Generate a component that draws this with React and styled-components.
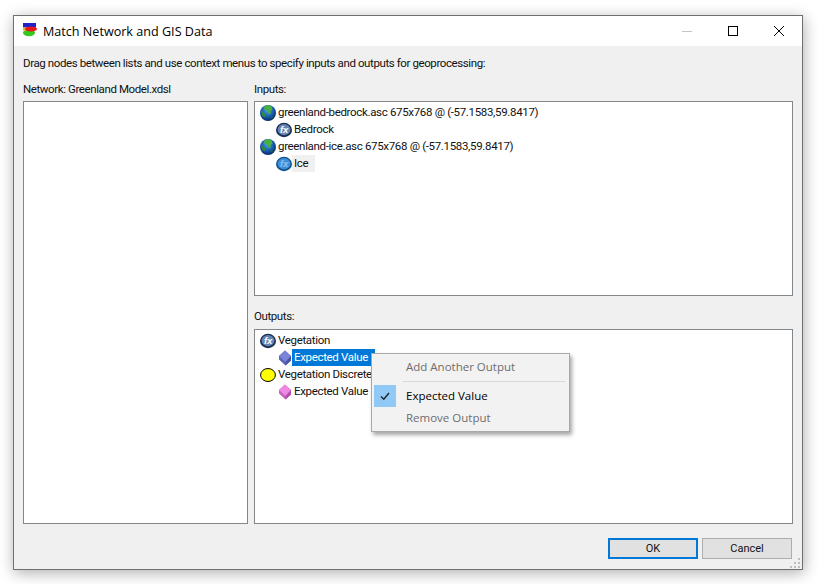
import React from 'react'
import styled, {createGlobalStyle} from 'styled-components'

const GlobalStyle = createGlobalStyle`
    html, body {
        margin: 0;
        background: #fff;
        overflow: hidden;
    }
    body {
        font-family: Roboto, "Noto Sans", sans-serif;
        font-size: 11.5px;
        letter-spacing: -0.4px;
        color: #111;
    }
`

const Page = styled.div`
    width: 819px;
    height: 584px;
    padding: 15px 0 0 13px;
    box-sizing: border-box;
`

const Dialog = styled.div`
    position: relative;
    width: 790px;
    height: 555px;
    box-sizing: border-box;
    display: flex;
    flex-direction: column;
    background: #f0f0f0;
    border: 1px solid #6f6f6f;
    box-shadow: 1px 3px 14px rgba(0, 0, 0, 0.32);
`

const TitleBar = styled.div`
    height: 30px;
    flex: none;
    display: flex;
    align-items: center;
    background: #fff;
    padding-left: 8px;
`

const TitleText = styled.div`
    flex: 1;
    margin-left: 5px;
    font-family: "Open Sans", sans-serif;
    font-size: 12.6px;
    letter-spacing: 0;
    color: #000;
`

const WinButton = styled.div`
    width: 46px;
    height: 30px;
    display: flex;
    align-items: center;
    justify-content: center;
`

const Body = styled.div`
    flex: 1;
    display: flex;
    flex-direction: column;
    padding: 9px 9px 0;
`

const Line = styled.div`
    height: 16px;
    line-height: 16px;
    white-space: nowrap;
`

const Columns = styled.div`
    display: grid;
    grid-template-columns: 225px 539px;
    column-gap: 6px;
    margin-top: 10px;
`

const Column = styled.div`
    display: flex;
    flex-direction: column;
`

const Label = styled(Line)`
    margin-top: ${p => p.$top || 0}px;
    margin-bottom: ${p => p.$bottom || 4}px;
`

const ListBox = styled.div`
    height: ${p => p.$h}px;
    box-sizing: border-box;
    background: #fff;
    border: 1px solid #82878c;
    padding: 2px 0 0 5px;
`

const Row = styled.div`
    height: 17px;
    display: flex;
    align-items: center;
    padding-left: ${p => (p.$child ? 16 : 0)}px;
    white-space: nowrap;
    letter-spacing: -0.33px;
    svg {
        flex: none;
    }
`

const RowText = styled.span`
    height: 17px;
    line-height: 16px;
    padding: 0 ${p => p.$right || 2}px 0 2px;
    background: ${p => (p.$sel ? '#0078d7' : p.$hover ? '#f0f0f0' : 'transparent')};
    color: ${p => (p.$sel ? '#fff' : '#111')};
`

const Footer = styled.div`
    display: flex;
    justify-content: flex-end;
    gap: 4px;
    margin-top: 14px;
    padding-right: 1px;
`

const Button = styled.div`
    width: 90px;
    height: 21px;
    box-sizing: border-box;
    display: flex;
    align-items: center;
    justify-content: center;
    font-size: 11px;
    letter-spacing: 0;
    background: #e1e1e1;
    border: ${p => (p.$primary ? '2px solid #0078d7' : '1px solid #adadad')};
`

const Grip = styled.svg`
    position: absolute;
    right: 1px;
    bottom: 0;
`

const Menu = styled.div`
    position: absolute;
    left: 357px;
    top: 337px;
    width: 199px;
    height: 79px;
    box-sizing: border-box;
    padding: 2px;
    font-family: "Open Sans", sans-serif;
    font-size: 11.5px;
    letter-spacing: 0;
    background: #f2f2f2;
    border: 1px solid #a8a8a8;
    box-shadow: 2px 3px 4px rgba(0, 0, 0, 0.35);
`

const MenuItem = styled.div`
    height: 22px;
    line-height: 20px;
    display: flex;
    align-items: center;
    color: ${p => (p.$off ? '#6d6d6d' : '#000')};
    white-space: nowrap;
`

const CheckCell = styled.div`
    width: 22px;
    height: 22px;
    margin-right: 10px;
    display: flex;
    align-items: center;
    justify-content: center;
    background: ${p => (p.$on ? '#90c8f6' : 'transparent')};
`

const MenuRule = styled.div`
    height: 1px;
    margin: 3px 2px 3px 29px;
    background: #d7d7d7;
`

const AppIcon = () => (
    <svg width="16" height="16" viewBox="0 0 16 16">
        <ellipse cx="7" cy="9.8" rx="6" ry="3.4" fill="#35c81e"/>
        <rect x="1" y="0" width="13" height="4.5" fill="#2222cc"/>
        <rect x="1" y="4.5" width="4" height="3" fill="#e8b020"/>
        <ellipse cx="9" cy="6" rx="6" ry="2.6" fill="#e81818"/>
    </svg>
)

const Globe = () => (
    <svg width="16" height="16" viewBox="0 0 16 16">
        <defs>
            <radialGradient id="sea" cx="0.45" cy="0.35" r="0.7">
                <stop offset="0" stopColor="#4a9ae8"/>
                <stop offset="0.6" stopColor="#1454b0"/>
                <stop offset="1" stopColor="#06204e"/>
            </radialGradient>
        </defs>
        <circle cx="8" cy="8" r="8" fill="url(#sea)"/>
        <path d="M4.5 1.2 C6.5 -0.2 9.5 -0.2 11.5 1.2 L12.5 4.5 L10.5 6.5 L10.8 9.5 L8.5 8.5 L7.4 5.5 L5 5.5 L4 3.5 Z" fill="#49b040"/>
        <path d="M1 6.5 L3.5 7 L5.5 9.5 L4.8 12.5 L2.5 11 Z" fill="#2f8c34"/>
        <path d="M10 12.5 L13 10.5 L12 13.5 Z" fill="#1f7030"/>
    </svg>
)

const Fx = ({bright}) => (
    <svg width="16" height="16" viewBox="0 0 16 16">
        <ellipse cx="8" cy="8" rx="8" ry="7.2" fill={bright ? '#14558f' : '#1a2f50'}/>
        <ellipse cx="8" cy="7.6" rx="6.4" ry="5.6" fill={bright ? '#3d8fdc' : '#6485b5'}/>
        <text x="8" y="11" textAnchor="middle" letterSpacing="-0.2" fontFamily="Liberation Sans" fontStyle="italic" fontWeight="700" fontSize="9.5" fill={bright ? '#8cc0ee' : '#fff'}>fx</text>
    </svg>
)

const YellowNode = () => (
    <svg width="16" height="16" viewBox="0 0 16 16">
        <ellipse cx="8" cy="8" rx="7.4" ry="6.5" fill="#ffff00" stroke="#000" strokeWidth="1"/>
    </svg>
)

const Gem = ({top, side, edge}) => (
    <svg width="16" height="16" viewBox="0 0 16 16">
        <path d="M9 0.5 L15 6 L15 10.5 L9.5 15.5 L3 9.5 L3 6 Z" fill={side}/>
        <path d="M9 0.5 L15 6 L9.5 12 L3 6 Z" fill={top}/>
        <path d="M9.5 12 L15 6 L15 10.5 L9.5 15.5 Z" fill={edge}/>
    </svg>
)

const App = () => {
    return (
        <Page>
            <GlobalStyle/>
            <Dialog>
                <TitleBar>
                    <AppIcon/>
                    <TitleText>Match Network and GIS Data</TitleText>
                    <WinButton>
                        <svg width="10" height="10"><path d="M0 5.5H10" stroke="#c4c4c4"/></svg>
                    </WinButton>
                    <WinButton>
                        <svg width="10" height="10"><rect x="0.5" y="0.5" width="9" height="9" fill="none" stroke="#000"/></svg>
                    </WinButton>
                    <WinButton>
                        <svg width="10" height="10"><path d="M0 0L10 10M10 0L0 10" stroke="#000"/></svg>
                    </WinButton>
                </TitleBar>
                <Body>
                    <Line>Drag nodes between lists and use context menus to specify inputs and outputs for geoprocessing:</Line>
                    <Columns>
                        <Column>
                            <Label>Network: Greenland Model.xdsl</Label>
                            <ListBox $h={423}/>
                        </Column>
                        <Column>
                            <Label>Inputs:</Label>
                            <ListBox $h={195}>
                                <Row><Globe/><RowText>greenland-bedrock.asc 675x768 @ (-57.1583,59.8417)</RowText></Row>
                                <Row $child><Fx/><RowText>Bedrock</RowText></Row>
                                <Row><Globe/><RowText>greenland-ice.asc 675x768 @ (-57.1583,59.8417)</RowText></Row>
                                <Row $child><Fx bright/><RowText $hover $right={7}>Ice</RowText></Row>
                            </ListBox>
                            <Label $top={12} $bottom={5}>Outputs:</Label>
                            <ListBox $h={195}>
                                <Row><Fx/><RowText>Vegetation</RowText></Row>
                                <Row $child><Gem top="#7a84d8" side="#5a64b8" edge="#4a54a0"/><RowText $sel $right={7}>Expected Value</RowText></Row>
                                <Row><YellowNode/><RowText>Vegetation Discrete</RowText></Row>
                                <Row $child><Gem top="#ee88e0" side="#c860c0" edge="#b050a8"/><RowText>Expected Value</RowText></Row>
                            </ListBox>
                        </Column>
                    </Columns>
                    <Footer>
                        <Button $primary>OK</Button>
                        <Button>Cancel</Button>
                    </Footer>
                </Body>
                <Menu>
                    <MenuItem $off><CheckCell/>Add Another Output</MenuItem>
                    <MenuRule/>
                    <MenuItem>
                        <CheckCell $on>
                            <svg width="12" height="12" viewBox="0 0 12 12"><path d="M2 6.5L4.8 9.2L10 3" fill="none" stroke="#222" strokeWidth="1.4"/></svg>
                        </CheckCell>
                        Expected Value
                    </MenuItem>
                    <MenuItem $off><CheckCell/>Remove Output</MenuItem>
                </Menu>
                <Grip width="11" height="11" viewBox="0 0 11 11">
                    <path d="M8 0h2v2H8zM4 4h2v2H4zM8 4h2v2H8zM0 8h2v2H0zM4 8h2v2H4zM8 8h2v2H8z" fill="#bdbdbd"/>
                </Grip>
            </Dialog>
        </Page>
    )
}

export default App
